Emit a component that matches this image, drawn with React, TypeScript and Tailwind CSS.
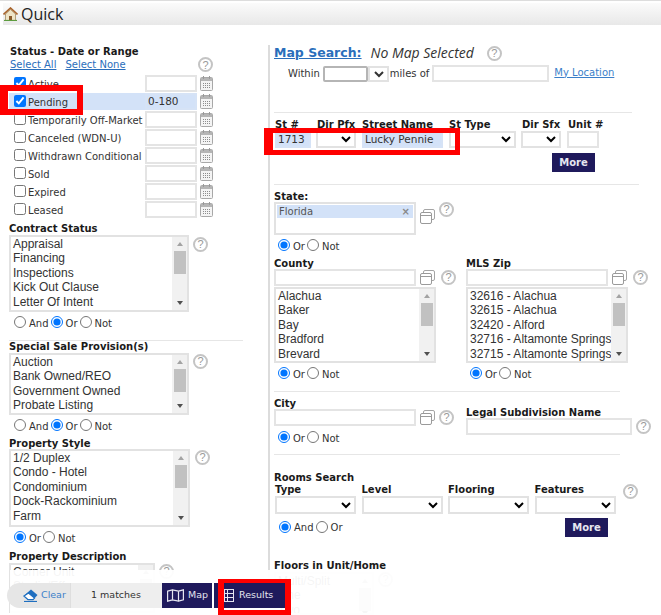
const statuses = [
  { name: "Active", checked: true, value: "" },
  { name: "Pending", checked: true, value: "0-180" },
  { name: "Temporarily Off-Market", checked: false, value: "" },
  { name: "Canceled (WDN-U)", checked: false, value: "" },
  { name: "Withdrawn Conditional", checked: false, value: "" },
  { name: "Sold", checked: false, value: "" },
  { name: "Expired", checked: false, value: "" },
  { name: "Leased", checked: false, value: "" },
];

const Help = ({ className = "" }: { className?: string }) => (
  <div
    className={`flex h-[15px] w-[15px] shrink-0 items-center justify-center rounded-full border-2 border-[#c4c4c4] font-['Liberation_Sans',sans-serif] text-[11px] font-normal text-[#999] ${className}`}
  >
    ?
  </div>
);

const Calendar = () => (
  <svg width="13" height="16" viewBox="0 0 13 16" className="shrink-0">
    <rect x="0.5" y="2.5" width="12" height="13" rx="1" fill="#f4f4f4" stroke="#a8a8a8" />
    <rect x="1" y="3" width="11" height="3" fill="#b5b5b5" />
    <path d="M3.5 1v3M9.5 1v3" stroke="#999" />
    <path d="M3 8.5h7M3 10.5h7M3 12.5h7" stroke="#8d8d8d" strokeDasharray="1 1" />
  </svg>
);

const Copy = () => (
  <svg width="15" height="15" viewBox="0 0 15 15" className="shrink-0">
    <rect x="3.5" y="0.5" width="11" height="10" rx="1.5" fill="#fff" stroke="#a5a5a5" />
    <rect x="0.5" y="3.5" width="11" height="11" rx="1.5" fill="#fff" stroke="#9a9a9a" />
    <path d="M1 6.5h10" stroke="#9a9a9a" />
  </svg>
);

const Check = ({ name, checked }: { name: string; checked: boolean }) => (
  <input
    type="checkbox"
    defaultChecked={checked}
    aria-label={name}
    className="m-0 h-[12px] w-[12px] shrink-0 accent-[#0075ff]"
  />
);

const Radios = ({ options, checked, className = "" }: { options: string[]; checked: string; className?: string }) => (
  <div className={`flex h-[16px] shrink-0 items-center text-[10px] text-[#333] ${className}`}>
    {options.map((o) => (
      <label key={o} className="mr-[2px] flex items-center gap-[3px]">
        <input type="radio" defaultChecked={o === checked} className="m-0 h-[12px] w-[12px] accent-[#0075ff]" />
        <span className="pt-[2px]">{o}</span>
      </label>
    ))}
  </div>
);

const ListBox = ({ items, className }: { items: string[]; className: string }) => (
  <div className={`flex shrink-0 overflow-hidden border-2 border-[#e2e2e2] bg-white ${className}`}>
    <div className="min-w-0 flex-1 overflow-hidden pl-[2px] font-['Liberation_Sans',sans-serif] text-[12px] leading-[14.4px] whitespace-nowrap text-[#333]">
      {items.map((i) => (
        <div key={i}>{i}</div>
      ))}
    </div>
    <div className="flex w-[15px] shrink-0 flex-col items-center bg-[#f1f1f1]">
      <div className="mt-[5px] h-0 w-0 border-x-[3px] border-b-[4px] border-x-transparent border-b-[#a3a3a3]" />
      <div className="mt-[5px] h-[23px] w-[12px] shrink-0 bg-[#c1c1c1]" />
      <div className="flex-1" />
      <div className="mb-[5px] h-0 w-0 border-x-[3px] border-t-[4px] border-x-transparent border-t-[#505050]" />
    </div>
  </div>
);

const Field = ({ className = "", value = "", filled = false }: { className?: string; value?: string; filled?: boolean }) => (
  <div
    className={`shrink-0 border-2 px-[1px] text-[10.5px] leading-[13px] text-[#333] ${filled ? "border-[#d6e3f6] bg-[#d3e2f8]" : "border-[#e4e4e4] bg-white"} ${className}`}
  >
    {value}
  </div>
);

const Pick = ({ className = "" }: { className?: string }) => (
  <select className={`shrink-0 border-2 border-[#e2e2e2] bg-white ${className}`} aria-label="pick" />
);

// tight headings sit 1px closer to the control below them
const Heading = ({ children, className = "", tight = false }: { children: React.ReactNode; className?: string; tight?: boolean }) => (
  <div className={`text-[10px] leading-[12px] font-bold whitespace-nowrap text-[#1a1a1a] ${tight ? "h-[11px]" : "h-[12px]"} ${className}`}>
    {children}
  </div>
);

const More = ({ className = "" }: { className?: string }) => (
  <div className={`flex h-[19px] w-[43px] shrink-0 items-center justify-center bg-[#1f1a5c] text-[10px] font-bold text-[#e6e6f0] ${className}`}>
    More
  </div>
);

const Divider = ({ className = "" }: { className?: string }) => <div className={`h-[1px] bg-[#e6e6e6] ${className}`} />;

const App = () => {
  return (
    <div className="relative h-[615px] w-[661px] overflow-hidden bg-white font-['DejaVu_Sans',sans-serif]">
      <div className="h-[1px] bg-[#ddd]" />
      {/* Title */}
      <div className="mt-[2px] ml-[3px] flex h-[22px] items-center gap-[3px] bg-gradient-to-b from-[#fbfbfb] to-[#e8e8e8]">
        <svg width="15" height="14" viewBox="0 0 15 14" className="shrink-0">
          <path d="M2.5 7v6.5h10V7L7.5 2.5z" fill="#efe4c6" stroke="#8a6d3b" strokeWidth="0.6" />
          <path d="M0.5 7.5 7.5 1l7 6.5" fill="none" stroke="#a8632a" strokeWidth="1.6" />
          <rect x="6" y="9" width="3" height="4.5" fill="#8a5a2b" />
          <path d="M1 13.5h13" stroke="#5d9c3f" strokeWidth="1.2" />
        </svg>
        <span className="font-['Open_Sans',sans-serif] text-[16px] leading-none text-[#222]">Quick</span>
      </div>

      <div className="flex">
        {/* Left column */}
        <div className="w-[268px] shrink-0 pt-[21px] pl-[9px]">
          <Heading className="pl-[1px]">Status - Date or Range</Heading>
          <div className="flex h-[16px] pr-[55px] pl-[1px] text-[10px] leading-[14px] text-[#2a6ebb]">
            <span className="underline">Select All</span>
            <span className="ml-[9px] underline">Select None</span>
            <Help className="mt-[-1px] ml-auto" />
          </div>
          <div>
            {statuses.map((s) => (
              <div key={s.name} className="flex h-[18px] items-center">
                <div className={`flex h-[17px] w-[188px] items-center pl-[5px] ${s.value ? "bg-[#d3e2f8]" : ""}`}>
                  <Check name={s.name} checked={s.checked} />
                  <span className="ml-[2px] w-[117px] shrink-0 pt-[3px] text-[10px] leading-[12px] whitespace-nowrap text-[#333]">
                    {s.name}
                  </span>
                  <Field className="h-[17px] w-[52px]" value={s.value} filled={!!s.value} />
                </div>
                <div className="ml-[3px]">
                  <Calendar />
                </div>
              </div>
            ))}
          </div>

          <Heading className="mt-[5px]">Contract Status</Heading>
          <div className="flex gap-[4px]">
            <ListBox
              items={["Appraisal", "Financing", "Inspections", "Kick Out Clause", "Letter Of Intent"]}
              className="h-[77px] w-[180px]"
            />
            <Help className="mt-[2px]" />
          </div>
          <Radios options={["And", "Or", "Not"]} checked="Or" className="mt-[2px] pl-[5px]" />
          <Divider className="mt-[10px] w-[234px]" />

          <Heading>Special Sale Provision(s)</Heading>
          <div className="flex gap-[4px]">
            <ListBox items={["Auction", "Bank Owned/REO", "Government Owned", "Probate Listing"]} className="h-[62px] w-[180px]" />
            <Help className="mt-[1px]" />
          </div>
          <Radios options={["And", "Or", "Not"]} checked="Or" className="mt-[2px] pl-[5px]" />

          <Heading className="mt-[5px]" tight>
            Property Style
          </Heading>
          <div className="flex gap-[5px]">
            <ListBox
              items={["1/2 Duplex", "Condo - Hotel", "Condominium", "Dock-Rackominium", "Farm"]}
              className="h-[78px] w-[181px]"
            />
            <Help className="mt-[1px]" />
          </div>
          <Radios options={["Or", "Not"]} checked="Or" className="mt-[2px] pl-[5px]" />

          <Heading className="mt-[6px]">Property Description</Heading>
          <div className="flex gap-[4px]">
            <ListBox items={["Corner Unit", "Studio/Eff.", "End Unit"]} className="h-[50px] w-[146px]" />
            <Help className="mt-[1px]" />
          </div>
        </div>

        {/* Right column */}
        <div className="mt-[20px] h-[570px] flex-1 border-l-2 border-[#dcdcdc] pl-[4px]">
          <div className="flex h-[16px] items-center">
            <span className="text-[12.5px] font-bold text-[#2a6ebb] underline">Map Search:</span>
            <span className="ml-[9px] font-['Open_Sans',sans-serif] text-[14px] leading-[14px] text-[#333] italic">No Map Selected</span>
            <Help className="ml-[13px]" />
          </div>
          <div className="mt-[4px] flex h-[17px] items-center pl-[14px] text-[10px] text-[#333]">
            <span>Within</span>
            <div className="ml-[3px] h-[16px] w-[45px] shrink-0 rounded-[2px] border-2 border-[#b5b5b5]" />
            <Pick className="h-[16px] w-[21px]" />
            <span className="ml-[1px]">miles of</span>
            <Field className="ml-[3px] h-[17px] w-[117px]" />
            <span className="mt-[-3px] ml-[5px] text-[#3b7fc9] underline">My Location</span>
          </div>
          <Divider className="mt-[30px] w-[358px]" />

          <div className="mt-[6px] flex h-[12px] text-[10px] leading-[12px] font-bold text-[#1a1a1a]">
            <span className="w-[43px] pl-[1px]">St #</span>
            <span className="w-[45px]">Dir Pfx</span>
            <span className="w-[87px] whitespace-nowrap">Street Name</span>
            <span className="w-[73px]">St Type</span>
            <span className="w-[46px]">Dir Sfx</span>
            <span>Unit #</span>
          </div>
          <div className="flex h-[17px] items-stretch">
            <Field className="ml-[1px] w-[36px]" value="1713" filled />
            <Pick className="ml-[5px] w-[40px]" />
            <Field className="ml-[6px] w-[81px]" value="Lucky Pennie" filled />
            <Pick className="ml-[6px] w-[67px]" />
            <Pick className="ml-[5px] w-[40px]" />
            <Field className="ml-[6px] w-[32px]" />
          </div>
          <More className="mt-[5px] ml-[278px]" />
          <Divider className="mt-[12px] w-[365px]" />

          <Heading className="mt-[6px]" tight>
            State:
          </Heading>
          <div className="flex">
            <div className="h-[33px] w-[142px] shrink-0 border-2 border-[#e2e2e2] p-[1px]">
              <div className="flex h-[13px] items-center justify-between bg-[#d3e2f8] pr-[3px] pl-[2px] text-[10px] text-[#555]">
                Florida<span className="font-bold text-[#888]">×</span>
              </div>
            </div>
            <div className="mt-[7px] ml-[4px]">
              <Copy />
            </div>
            <Help className="ml-[4px]" />
          </div>
          <Radios options={["Or", "Not"]} checked="Or" className="mt-[2px] pl-[4px]" />

          <div className="mt-[5px] flex">
            <div className="w-[192px] shrink-0">
              <Heading tight>County</Heading>
              <div className="flex h-[17px] items-center">
                <Field className="h-[17px] w-[142px]" />
                <div className="ml-[4px]">
                  <Copy />
                </div>
                <Help className="ml-[6px]" />
              </div>
              <ListBox items={["Alachua", "Baker", "Bay", "Bradford", "Brevard"]} className="mt-[1px] h-[76px] w-[162px]" />
              <Radios options={["Or", "Not"]} checked="Or" className="mt-[2px] pl-[4px]" />
            </div>
            <div className="w-[166px] shrink-0">
              <Heading tight>MLS Zip</Heading>
              <div className="flex h-[17px] items-center">
                <Field className="h-[17px] w-[142px]" />
                <div className="ml-[4px]">
                  <Copy />
                </div>
                <Help className="ml-[6px]" />
              </div>
              <ListBox
                items={["32616 - Alachua", "32615 - Alachua", "32420 - Alford", "32716 - Altamonte Springs", "32715 - Altamonte Springs"]}
                className="mt-[1px] h-[76px] w-[162px]"
              />
              <Radios options={["Or", "Not"]} checked="Or" className="mt-[2px] pl-[4px]" />
            </div>
          </div>
          <Divider className="mt-[10px] w-[346px]" />

          <div className="mt-[6px] flex">
            <div className="w-[192px] shrink-0">
              <Heading tight>City</Heading>
              <div className="flex h-[17px] items-center">
                <Field className="h-[17px] w-[142px]" />
                <div className="ml-[4px]">
                  <Copy />
                </div>
                <Help className="ml-[4px]" />
              </div>
              <Radios options={["Or", "Not"]} checked="Or" className="mt-[3px] pl-[4px]" />
            </div>
            <div className="pt-[9px]">
              <Heading tight>Legal Subdivision Name</Heading>
              <div className="flex h-[17px] items-center">
                <Field className="h-[17px] w-[166px]" />
                <Help className="ml-[4px]" />
              </div>
            </div>
          </div>
          <Divider className="mt-[9px] w-[346px]" />

          <Heading className="mt-[17px]">Rooms Search</Heading>
          <div className="flex">
            {["Type", "Level", "Flooring", "Features"].map((label) => (
              <div key={label} className="w-[86.5px] shrink-0 pl-[1px]">
                <Heading>{label}</Heading>
                <Pick className="block h-[18px] w-[81px]" />
              </div>
            ))}
            <Help className="ml-[3px]" />
          </div>
          <div className="mt-[4px] flex h-[19px] items-start">
            <Radios options={["And", "Or"]} checked="And" className="w-[291px] pt-[1px] pl-[5px]" />
            <More />
          </div>
          <Heading className="mt-[23px]">Floors in Unit/Home</Heading>
          <div className="flex gap-[4px]">
            <ListBox items={["Multi/Split", "One", "Two"]} className="h-[43px] w-[100px]" />
            <Help />
          </div>
        </div>
      </div>

      {/* Floating search bar */}
      <div className="absolute top-[570px] right-0 left-[10px] h-[45px] bg-white/95" />
      <div className="absolute top-[583px] left-[7px] flex h-[25px] items-stretch text-[10px]">
        <div className="flex w-[64px] items-center rounded-l-[13px] border-r border-[#dedede] bg-[#e6e6e6]">
          <svg width="15" height="13" viewBox="0 0 15 13" className="ml-[16px] shrink-0">
            <path d="M8 0.5 14.5 6 10 11H5L0.5 7z" fill="#1f6fc0" />
            <path d="M1 7 5 10.6h5l1.5-1.6-6-5z" fill="#fff" stroke="#1f6fc0" strokeWidth="1.2" />
            <path d="M1 12.5h13" stroke="#1f6fc0" strokeWidth="1.2" />
          </svg>
          <span className="ml-[3px] text-[9.5px] text-[#3b7fc9]">Clear</span>
        </div>
        <div className="flex w-[91px] items-center bg-[#eeeeee] pl-[20px]">
          <span className="text-[9.5px] whitespace-nowrap text-[#333]">1 matches</span>
        </div>
        <div className="flex w-[50px] items-center gap-[4px] bg-[#1f1a5c] pl-[5px] text-[#e6e6f0]">
          <svg width="17" height="13" viewBox="0 0 17 13" fill="none" stroke="#e6e6f0" strokeWidth="1.2" className="shrink-0">
            <path d="M0.6 2.2 5.5 0.8l6 1.4 4.9-1.4v10l-4.9 1.4-6-1.4-4.9 1.4z" />
            <path d="M5.5 0.8v10M11.5 2.2v10" />
          </svg>
          <span className="text-[9.5px]">Map</span>
        </div>
        <div className="ml-[2px] flex w-[71px] items-center gap-[5px] bg-[#1f1a5c] pl-[10px] text-[#e6e6f0]">
          <svg width="10" height="13" viewBox="0 0 10 13" fill="none" stroke="#e6e6f0" className="shrink-0">
            <rect x="0.5" y="0.5" width="9" height="12" />
            <path d="M3.5 0.5v12M0.5 4.5h9M0.5 8.5h9" />
          </svg>
          <span className="text-[9.5px]">Results</span>
        </div>
      </div>

      {/* Annotation boxes */}
      <div className="absolute top-[85px] left-0 h-[30px] w-[83px] border-y-[6px] border-r-[6px] border-l-[8px] border-[#ff0000]" />
      <div className="absolute top-[128px] left-[264px] h-[27px] w-[196px] border-y-[5px] border-r-[5px] border-l-[9px] border-[#ff0000]" />
      <div className="absolute top-[579px] left-[218px] h-[36px] w-[73px] border-x-[6px] border-t-[4px] border-b-[5px] border-[#ff0000]" />
    </div>
  );
};

export default App;
